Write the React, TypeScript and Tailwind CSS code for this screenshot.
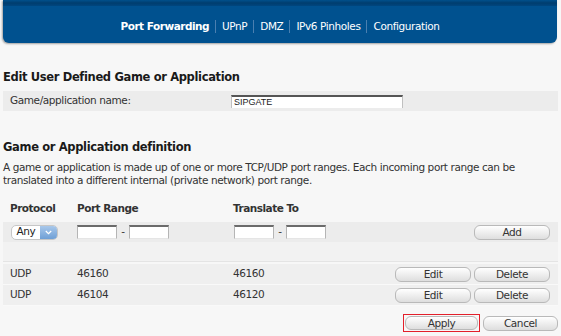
import React from "react";

const font = { fontFamily: '"DejaVu Sans", Verdana, sans-serif' };

function Btn({ label, w = "w-[76px]", h = "h-[15px]" }: { label: string; w?: string; h?: string }) {
  return (
    <button
      className={`${w} ${h} rounded-[6px] border border-[#b9b9b9] bg-gradient-to-b from-white to-[#dedede] text-[10.5px] tracking-[-0.4px] leading-[13px] text-[#333] flex items-center justify-center`}
    >
      {label}
    </button>
  );
}

function SmallInput({ w = "w-[40px]" }: { w?: string }) {
  return (
    <div className={`${w} h-[14px] bg-white border-t-2 border-t-[#6b6b6b] border-x border-x-[#b5b5b5] border-b border-b-[#e5e5e5]`} />
  );
}

function NavSep() {
  return <span className="mx-[6px] h-[13px] w-px bg-[#4a7fb0]" />;
}

export default function App() {
  return (
    <div className="w-[561px] h-[336px] bg-[#f7f7f7] overflow-hidden text-[#222] text-[10.5px] tracking-[-0.4px]" style={font}>
      {/* header */}
      <div className="ml-[3px] w-[554px] h-[43px] rounded-b-[6px] bg-[#00518f] shadow-[-1px_1px_2px_rgba(0,0,0,0.35)] flex flex-col">
        <div className="h-[6px] bg-gradient-to-b from-[#00508c] via-[#003d6e] to-[#00467f]" />
        <div className="flex-1 flex items-center justify-center text-white text-[10.5px] pt-[4px]">
          <span className="font-bold tracking-[-0.5px]">Port Forwarding</span>
          <NavSep />
          <span>UPnP</span>
          <NavSep />
          <span>DMZ</span>
          <NavSep />
          <span>IPv6 Pinholes</span>
          <NavSep />
          <span>Configuration</span>
        </div>
      </div>

      <div className="px-[3px]">
        <div className="mt-[25px] h-[20px] flex items-center font-bold text-[11.5px] tracking-[-0.35px] text-[#1a1a1a]">
          Edit User Defined Game or Application
        </div>
        <div className="mt-[3px] h-[20px] w-[555px] bg-[#ececec] flex items-center text-[#333]">
          <span className="pl-[7px] w-[228px]">Game/application name:</span>
          <div className="h-[13px] w-[172px] bg-white border-t-2 border-t-[#555] border-x border-x-[#c0c0c0] text-[9px] tracking-normal leading-[10px] pl-[2px] text-[#222]" style={{ fontFamily: '"Liberation Sans", Arial, sans-serif' }}>
            SIPGATE
          </div>
        </div>

        <div className="mt-[27px] h-[20px] flex items-center font-bold text-[11.5px] tracking-[-0.35px] text-[#1a1a1a]">
          Game or Application definition
        </div>
        <div className="mt-[3px] leading-[13px] text-[#333] whitespace-nowrap">
          A game or application is made up of one or more TCP/UDP port ranges. Each incoming port range can be
          <br />
          translated into a different internal (private network) port range.
        </div>

        <div className="mt-[12px] h-[20px] flex items-center font-bold tracking-[-0.5px] text-[#333]">
          <span className="pl-[7px] w-[74px]">Protocol</span>
          <span className="w-[156px]">Port Range</span>
          <span>Translate To</span>
        </div>
        <div className="mt-[3px] h-[20px] w-[555px] bg-[#ececec] flex items-center text-[#333]">
          <div className="ml-[8px] w-[47px] h-[15px] rounded-[5px] border border-[#c6c6c6] bg-white flex overflow-hidden">
            <span className="flex-1 flex items-center justify-center text-[#222]">Any</span>
            <span className="w-[17px] bg-gradient-to-b from-[#a9c8ea] to-[#6e9fd6] flex items-center justify-center">
              <svg width="7" height="5" viewBox="0 0 7 5">
                <path d="M0.8 1 L3.5 3.6 L6.2 1" stroke="white" strokeWidth="1.3" fill="none" />
              </svg>
            </span>
          </div>
          <div className="ml-[19px] flex items-center">
            <SmallInput />
            <span className="w-[12px] text-center">-</span>
            <SmallInput />
          </div>
          <div className="ml-[65px] flex items-center">
            <SmallInput />
            <span className="w-[12px] text-center">-</span>
            <SmallInput />
          </div>
          <div className="ml-auto mr-[8px]">
            <Btn label="Add" w="w-[76px]" />
          </div>
        </div>
        <div className="h-[20px] w-[555px] bg-[#f2f2f2] border-b border-b-[#e4e4e4]" />

        <div className="mt-[2px] w-[555px] text-[#333]">
          {[
            ["UDP", "46160", "46160"],
            ["UDP", "46104", "46120"],
          ].map((r, i) => (
            <div key={i} className="h-[21px] bg-[#efefef] border-b border-b-[#f9f9f9] flex items-center">
              <span className="pl-[7px] w-[74px]">{r[0]}</span>
              <span className="w-[156px]">{r[1]}</span>
              <span className="w-[161px]">{r[2]}</span>
              <div className="ml-auto mr-[8px] flex gap-[3px]">
                <Btn label="Edit" />
                <Btn label="Delete" />
              </div>
            </div>
          ))}
        </div>

        <div className="mt-[8px] w-[555px] flex items-center justify-end gap-[3px]">
          <div className="border border-[#e3202b] p-px">
            <Btn label="Apply" w="w-[73px]" h="h-[14px]" />
          </div>
          <Btn label="Cancel" w="w-[75px]" />
        </div>
      </div>
    </div>
  );
}
